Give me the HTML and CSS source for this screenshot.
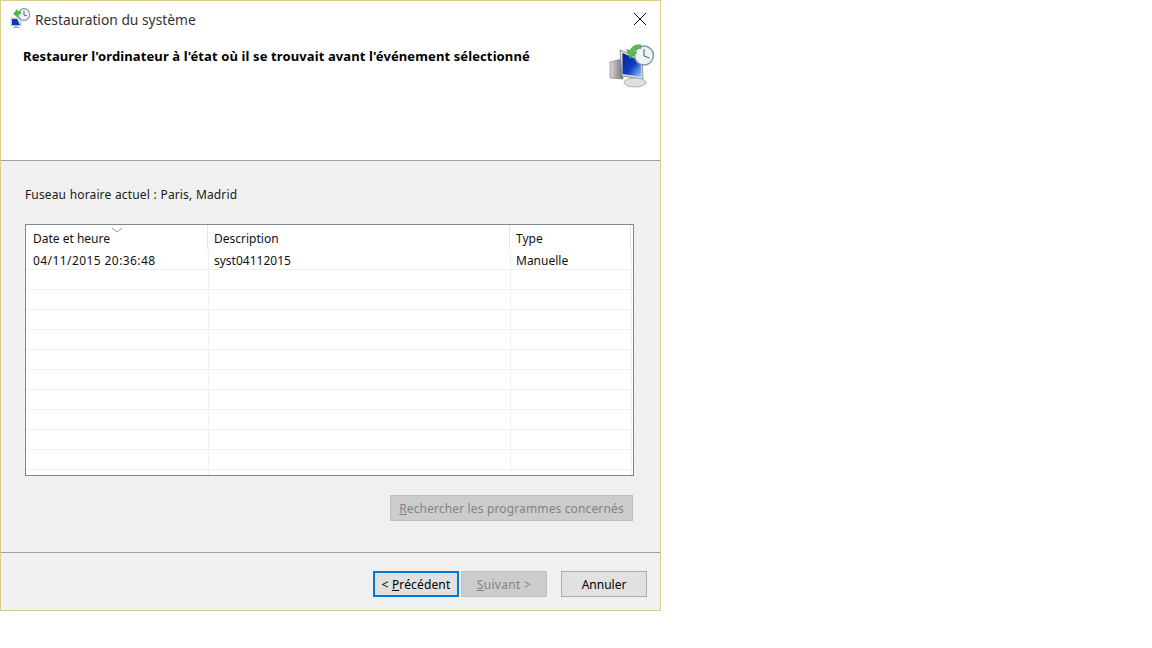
FILE: index.html
```html
<!DOCTYPE html>
<html lang="fr">
<head>
<meta charset="utf-8">
<title>Restauration du système</title>
<link rel="stylesheet" href="styles.css">
</head>
<body>
<div class="window">
  <div class="top">
    <div class="titlebar">
      <svg class="app-icon" width="20" height="20" viewBox="0 0 20 20">
        <rect x="1" y="10" width="10" height="7.5" fill="#d7e6f2" stroke="#8fa0ad" stroke-width=".6"/>
        <path d="M2 11h5l3 6H2z" fill="#0f35b5"/>
        <rect x="5" y="18" width="2" height="1" fill="#9aa0a6"/>
        <rect x="3" y="19" width="7" height="1" fill="#a9adb1"/>
        <circle cx="14" cy="6.5" r="5.8" fill="#eef2f5" stroke="#8a979f" stroke-width="1.2"/>
        <path d="M14 3v4l3 1" fill="none" stroke="#59666e"/>
        <path d="M3 6l4-5 1 2.500c1-.5 2-.5 3 0v3c-1-.5-2-.5-3 0l.5 3.500z" fill="#4fb648"/>
      </svg>
      <span class="title">Restauration du système</span>
      <svg class="close" width="14" height="14" viewBox="0 0 14 14">
        <path d="M1 1l12 12M13 1L1 13" stroke="#111" fill="none"/>
      </svg>
    </div>
    <div class="header">
      <h1 class="heading">Restaurer l'ordinateur à l'état où il se trouvait avant l'événement sélectionné</h1>
      <svg class="hero-icon" width="46" height="46" viewBox="0 0 46 46">
        <defs>
          <linearGradient id="scr" x1="0" y1="0" x2="1" y2="1">
            <stop offset="0" stop-color="#0a1f8f"/>
            <stop offset="0.55" stop-color="#0f3fc4"/>
            <stop offset="1" stop-color="#a5cff0"/>
          </linearGradient>
          <linearGradient id="tower" x1="0" y1="0" x2="1" y2="0">
            <stop offset="0" stop-color="#dcdcdc"/>
            <stop offset="1" stop-color="#6f6f6f"/>
          </linearGradient>
        </defs>
        <path d="M1 20l12-3 1 20-13-1z" fill="url(#tower)" stroke="#7b7b7b" stroke-width=".6"/>
        <path d="M11 8l22 9 1 20-21-3z" fill="#dfe3e6" stroke="#8f9396"/>
        <path d="M13.500 11l18 8 1 16-19-3z" fill="url(#scr)"/>
        <path d="M20 37h12l1 1H19z" fill="#9da1a3"/>
        <ellipse cx="26" cy="40.500" rx="11" ry="4.500" fill="#dfe0e1" stroke="#a0a4a6" stroke-width=".8"/>
        <circle cx="35" cy="13.500" r="9.500" fill="#eef3f8" stroke="#8696a3" stroke-width="1.500"/>
        <path d="M35 7v7l5.500 2" fill="none" stroke="#4d5d68"/>
        <path d="M32 3c-5-1-9 1-11 5.500l-3.500-1 3.500 9 7-6-3.500-1c1.500-2.500 4.500-3.500 7.500-3z" fill="#58bd4e" stroke="#3f9a3b" stroke-width=".5"/>
      </svg>
    </div>
  </div>
  <div class="body">
    <p class="zone">Fuseau horaire actuel : Paris, Madrid</p>
    <div class="table">
      <div class="thead">
        <div class="th col-date">Date et heure<svg class="sort" width="10" height="5" viewBox="0 0 10 5"><path d="M0 0l5 4 5-4" fill="none" stroke="#9a9a9a"/></svg></div>
        <div class="th col-desc">Description</div>
        <div class="th col-type">Type</div>
      </div>
      <div class="row"><div class="td col-date stamp">04/11/2015 20:36:48</div><div class="td col-desc">syst04112015</div><div class="td col-type">Manuelle</div></div>
      <div class="row"><div class="td col-date"></div><div class="td col-desc"></div><div class="td col-type"></div></div>
      <div class="row"><div class="td col-date"></div><div class="td col-desc"></div><div class="td col-type"></div></div>
      <div class="row"><div class="td col-date"></div><div class="td col-desc"></div><div class="td col-type"></div></div>
      <div class="row"><div class="td col-date"></div><div class="td col-desc"></div><div class="td col-type"></div></div>
      <div class="row"><div class="td col-date"></div><div class="td col-desc"></div><div class="td col-type"></div></div>
      <div class="row"><div class="td col-date"></div><div class="td col-desc"></div><div class="td col-type"></div></div>
      <div class="row"><div class="td col-date"></div><div class="td col-desc"></div><div class="td col-type"></div></div>
      <div class="row"><div class="td col-date"></div><div class="td col-desc"></div><div class="td col-type"></div></div>
      <div class="row"><div class="td col-date"></div><div class="td col-desc"></div><div class="td col-type"></div></div>
      <div class="row"><div class="td col-date"></div><div class="td col-desc"></div><div class="td col-type"></div></div>
      <div class="row row-tail"><div class="td col-date"></div><div class="td col-desc"></div><div class="td col-type"></div></div>
    </div>
    <div class="scan-row">
      <button class="btn btn-disabled btn-scan" disabled><u>R</u>echercher les programmes concernés</button>
    </div>
  </div>
  <div class="footer">
    <button class="btn btn-focus">&lt; <u>P</u>récédent</button>
    <button class="btn btn-disabled btn-next" disabled><u>S</u>uivant &gt;</button>
    <button class="btn btn-cancel">Annuler</button>
  </div>
</div>
</body>
</html>
```
FILE: styles.css
```css
* { box-sizing: border-box; }
html, body { margin: 0; padding: 0; background: #fff; }
body { width: 1152px; height: 648px; overflow: hidden; font-family: "Noto Sans", "Open Sans", sans-serif; font-size: 12px; color: #000; }

.window { width: 661px; height: 611px; border: 1px solid #d9cc8c; background: #f0f0f0; display: flex; flex-direction: column; }
.top { height: 160px; background: #fff; border-bottom: 1px solid #a0a0a0; flex: none; }
.titlebar { height: 36px; display: flex; align-items: center; padding: 0 8px 0 9px; }
.app-icon { flex: none; margin-top: -3px; }
.title { font-size: 13.8px; color: #333; margin-left: 5px; flex: 1; }
.close { flex: none; margin-right: 5px; margin-top: -1px; }

.header { display: flex; justify-content: space-between; align-items: flex-start; padding: 0 5px 0 22px; }
.heading { margin: 9px 0 0; font-size: 13px; font-weight: 700; line-height: 20px; letter-spacing: 0.11px; }
.hero-icon { flex: none; margin-top: 5px; }

.body { flex: 1; padding: 25px 26px 0 24px; }
.zone { margin: 0 0 20px; line-height: 18px; color: #1a1a1a; letter-spacing: 0.13px; word-spacing: 0.4px; }

.table { height: 252px; border: 1px solid #828790; background: #fff; overflow: hidden; }
.thead { display: flex; height: 24px; }
.th { padding: 5px 6px 0; line-height: 18px; color: #111; position: relative; border-right: 1px solid #e5e5e5; }
.row { display: flex; height: 20px; border-bottom: 1px solid #f0f0f0; flex: none; }
.thead + .row { height: 21px; }
.row-tail { border-bottom: 0; }
.td { padding: 2px 6px 0; line-height: 20px; color: #111; border-right: 1px solid #f0f0f0; }
.stamp { letter-spacing: 0.42px; }
.col-date { width: 183px; flex: none; padding-left: 7px; }
.th.col-date { width: 182px; }
.col-desc { width: 302px; flex: none; }
.th.col-desc { width: 302px; }
.td.col-desc { padding-left: 5px; }
.col-type { width: 121px; flex: none; }
.td.col-type { padding-left: 5px; }
.sort { position: absolute; left: 86px; top: 3px; }

.scan-row { display: flex; justify-content: flex-end; margin: 19px 1px 0 0; }
.btn { height: 26px; width: 86px; font: inherit; font-size: 12px; padding: 0; border: 1px solid #adadad; background: #e1e1e1; color: #000; }
.btn-disabled { background: #cccccc; border-color: #bfbfbf; color: #838383; }
.btn-scan { width: 243px; letter-spacing: 0.14px; }
.btn-next { letter-spacing: 0.3px; }
.btn-focus { border: 2px solid #0078d7; background: #e1e1e1; letter-spacing: 0.15px; }

.footer { flex: none; height: 58px; margin-top: 0; border-top: 1px solid #a0a0a0; display: flex; align-items: flex-start; padding: 18px 0 0 372px; gap: 2px; }
.btn-cancel { margin-left: 12px; }
```
